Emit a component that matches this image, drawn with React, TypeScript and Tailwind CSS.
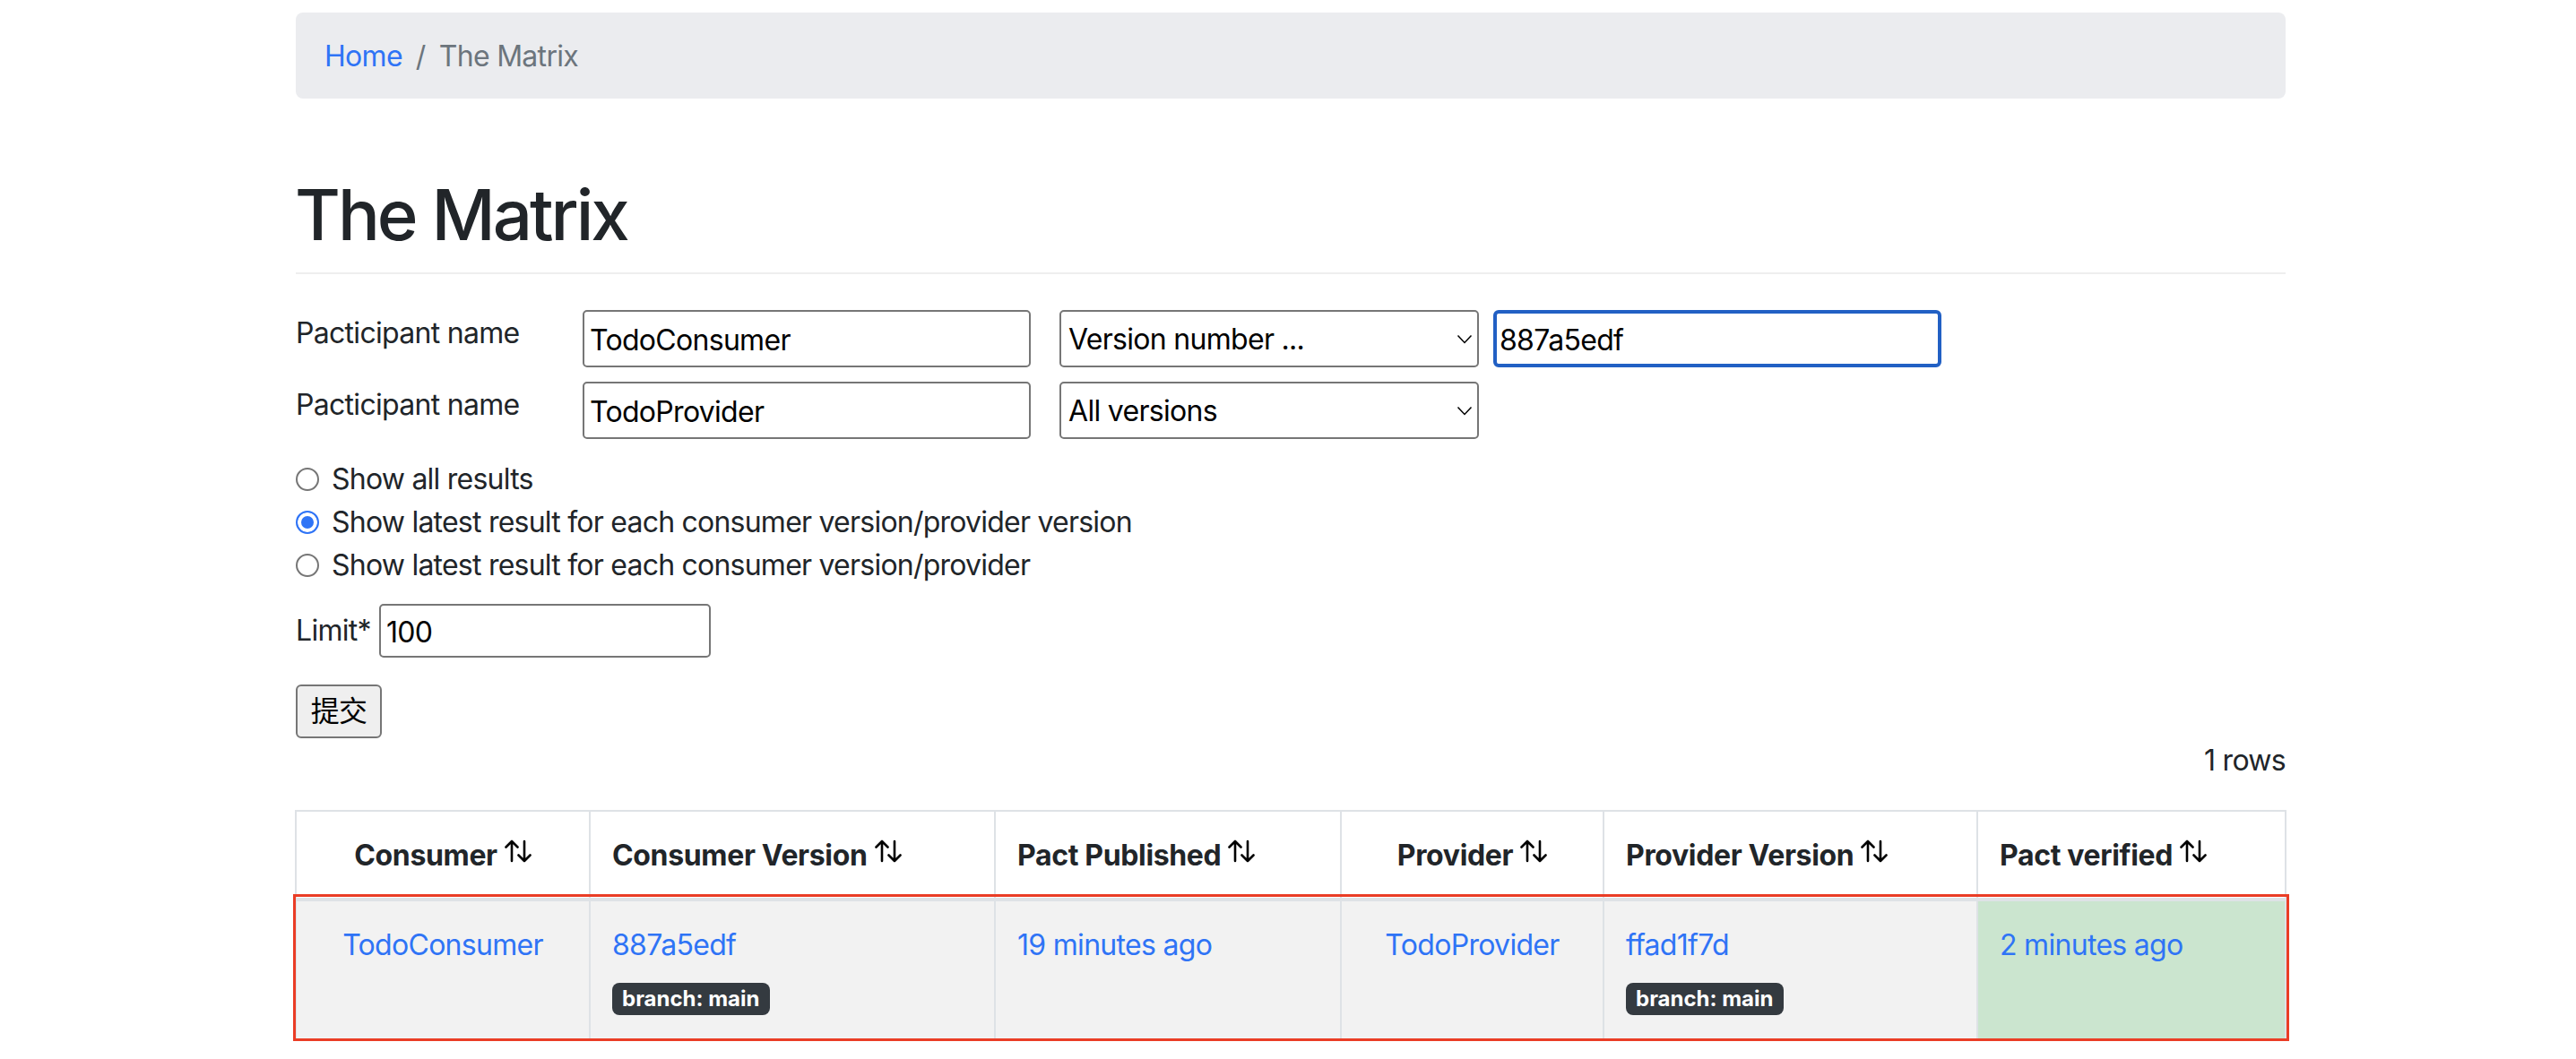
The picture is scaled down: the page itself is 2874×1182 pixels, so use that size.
const FONT = "font-['Inter','Noto_Sans_CJK_SC',sans-serif]";

const COLUMNS = [
  { label: "Consumer", width: "w-[328px]", center: true },
  { label: "Consumer Version", width: "w-[452px]" },
  { label: "Pact Published", width: "w-[386px]" },
  { label: "Provider", width: "w-[293px]", center: true },
  { label: "Provider Version", width: "w-[417px]" },
  { label: "Pact verified", width: "w-[344px]" },
];

function SortIcon() {
  return (
    <svg viewBox="0 0 30 26" className="inline-block w-[30px] h-[26px] align-top mt-[6px] ml-[8px]" fill="none" stroke="#000" strokeWidth="2.6" strokeLinecap="round" strokeLinejoin="round">
      <path d="M8 24V2M1.5 8.5 8 2l6.5 6.5" />
      <path d="M22 2v22M15.5 17.5 22 24l6.5-6.5" />
    </svg>
  );
}

function Chevron() {
  return (
    <svg viewBox="0 0 18 11" className="absolute right-[7px] top-[27px] w-[18px] h-[11px] pointer-events-none" fill="none" stroke="#000" strokeWidth="1.5">
      <path d="M1.5 1.5 9 9.5l7.5-8" />
    </svg>
  );
}

function TextInput({ value, className }: { value: string; className: string }) {
  return (
    <input
      readOnly
      value={value}
      className={`bg-white text-black text-[32px] pt-[2px] outline-none ${className}`}
    />
  );
}

function Select({ value }: { value: string }) {
  return (
    <div className="relative w-[468px] h-[64px]">
      <select
        value={value}
        onChange={() => {}}
        className="appearance-none w-full h-full bg-white text-black text-[32px] border-2 border-[#767676] rounded-[5px] pl-[8px] pt-[2px] outline-none"
      >
        <option>{value}</option>
      </select>
      <Chevron />
    </div>
  );
}

function Badge() {
  return (
    <div className="mt-[18px] flex">
      <span className="flex items-center h-[36px] px-[11px] rounded-[8px] bg-[#343a40] text-white text-[24px] tracking-normal font-bold leading-none">
        branch: main
      </span>
    </div>
  );
}

function Link({ children }: { children: string }) {
  return <a className="text-[#2f74f6] text-[32px] leading-[48px]">{children}</a>;
}

export default function App() {
  return (
    <div className={`${FONT} min-h-screen bg-white text-[#212529] text-[32px] leading-[48px] tracking-[-0.7px] pt-[14px]`}>
      <div className="ml-[330px] w-[2220px]">
        <nav className="h-[96px] rounded-[8px] bg-[#ebecef] px-[32px] pt-[2px] flex items-center">
          <a className="text-[#2f74f6]">Home</a>
          <span className="text-[#6c757d] px-[15px]">/</span>
          <span className="text-[#6c757d]">The Matrix</span>
        </nav>

        <h1 className="mt-[82px] text-[78px] leading-[96px] tracking-[-3px] -indent-[1px] font-medium pb-[16px] border-b-2 border-[#eeeeee]">The Matrix</h1>

        <div className="mt-[40px] flex flex-col gap-[16px]">
          <div className="flex items-start">
            <label className="w-[320px] pt-[2px]">Pacticipant name</label>
            <TextInput value="TodoConsumer" className="w-[500px] h-[64px] border-2 border-[#767676] rounded-[5px] px-[6px]" />
            <div className="ml-[32px]"><Select value="Version number ..." /></div>
            <TextInput value="887a5edf" className="ml-[16px] w-[500px] h-[64px] border-[4px] border-[#2260c4] rounded-[6px] px-[3px]" />
          </div>
          <div className="flex items-start">
            <label className="w-[320px] pt-[2px]">Pacticipant name</label>
            <TextInput value="TodoProvider" className="w-[500px] h-[64px] border-2 border-[#767676] rounded-[5px] px-[6px]" />
            <div className="ml-[32px]"><Select value="All versions" /></div>
          </div>
        </div>

        <div className="mt-[21px] flex flex-col tracking-[-0.77px]">
          {["Show all results", "Show latest result for each consumer version/provider version", "Show latest result for each consumer version/provider"].map((label, i) => (
            <label key={i} className="flex items-center h-[48px]">
              <input
                type="radio"
                name="scope"
                readOnly
                checked={i === 1}
                className="appearance-none m-0 w-[26px] h-[26px] mr-[14px] rounded-full border-2 border-[#767676] bg-white checked:border-[#2f74f6] checked:bg-[#2f74f6] checked:shadow-[inset_0_0_0_4px_#ffffff]"
              />
              {label}
            </label>
          ))}
        </div>

        <div className="mt-[19px] flex items-center">
          <label className="w-[93px]">Limit*</label>
          <TextInput value="100" className="w-[370px] h-[60px] border-2 border-[#767676] rounded-[5px] px-[6px]" />
        </div>

        <button className="block mt-[30px] w-[96px] h-[60px] bg-[#efefef] text-black border-2 border-[#767676] rounded-[6px] text-[32px] leading-none">提交</button>

        <div className="mt-[1px] text-right">1 rows</div>

        <div className="relative mt-[31px]">
          <table className="-ml-[1px] w-[2220px] table-fixed border-collapse border-2 border-[#dee2e6]">
            <thead>
              <tr>
                {COLUMNS.map((col) => (
                  <th key={col.label} className={`${col.width} ${col.center ? "text-center" : "text-left"} border-x-2 border-b-[4px] border-[#dee2e6] px-[24px] pt-[25px] pb-[23px] font-bold tracking-[-0.35px]`}>
                    {col.label}
                    <SortIcon />
                  </th>
                ))}
              </tr>
            </thead>
            <tbody>
              <tr className="align-top bg-[#f2f2f2]">
                <td className="border-x-2 border-[#dee2e6] px-[24px] pt-[25px] pb-[23px] h-[156px] text-center"><Link>TodoConsumer</Link></td>
                <td className="border-x-2 border-[#dee2e6] px-[24px] pt-[25px] pb-[23px]"><Link>887a5edf</Link><Badge /></td>
                <td className="border-x-2 border-[#dee2e6] px-[24px] pt-[25px] pb-[23px]"><Link>19 minutes ago</Link></td>
                <td className="border-x-2 border-[#dee2e6] px-[24px] pt-[25px] pb-[23px] text-center"><Link>TodoProvider</Link></td>
                <td className="border-x-2 border-[#dee2e6] px-[24px] pt-[25px] pb-[23px]"><Link>ffad1f7d</Link><Badge /></td>
                <td className="border-x-2 border-[#dee2e6] px-[24px] pt-[25px] pb-[23px] bg-[#cbe5cf]"><Link>2 minutes ago</Link></td>
              </tr>
            </tbody>
          </table>
          {/* annotation box drawn over the result row */}
          <div className="absolute left-[-3px] top-[94px] w-[2227px] h-[164px] border-[3px] border-[#ea3d26] pointer-events-none" />
        </div>
      </div>
    </div>
  );
}
